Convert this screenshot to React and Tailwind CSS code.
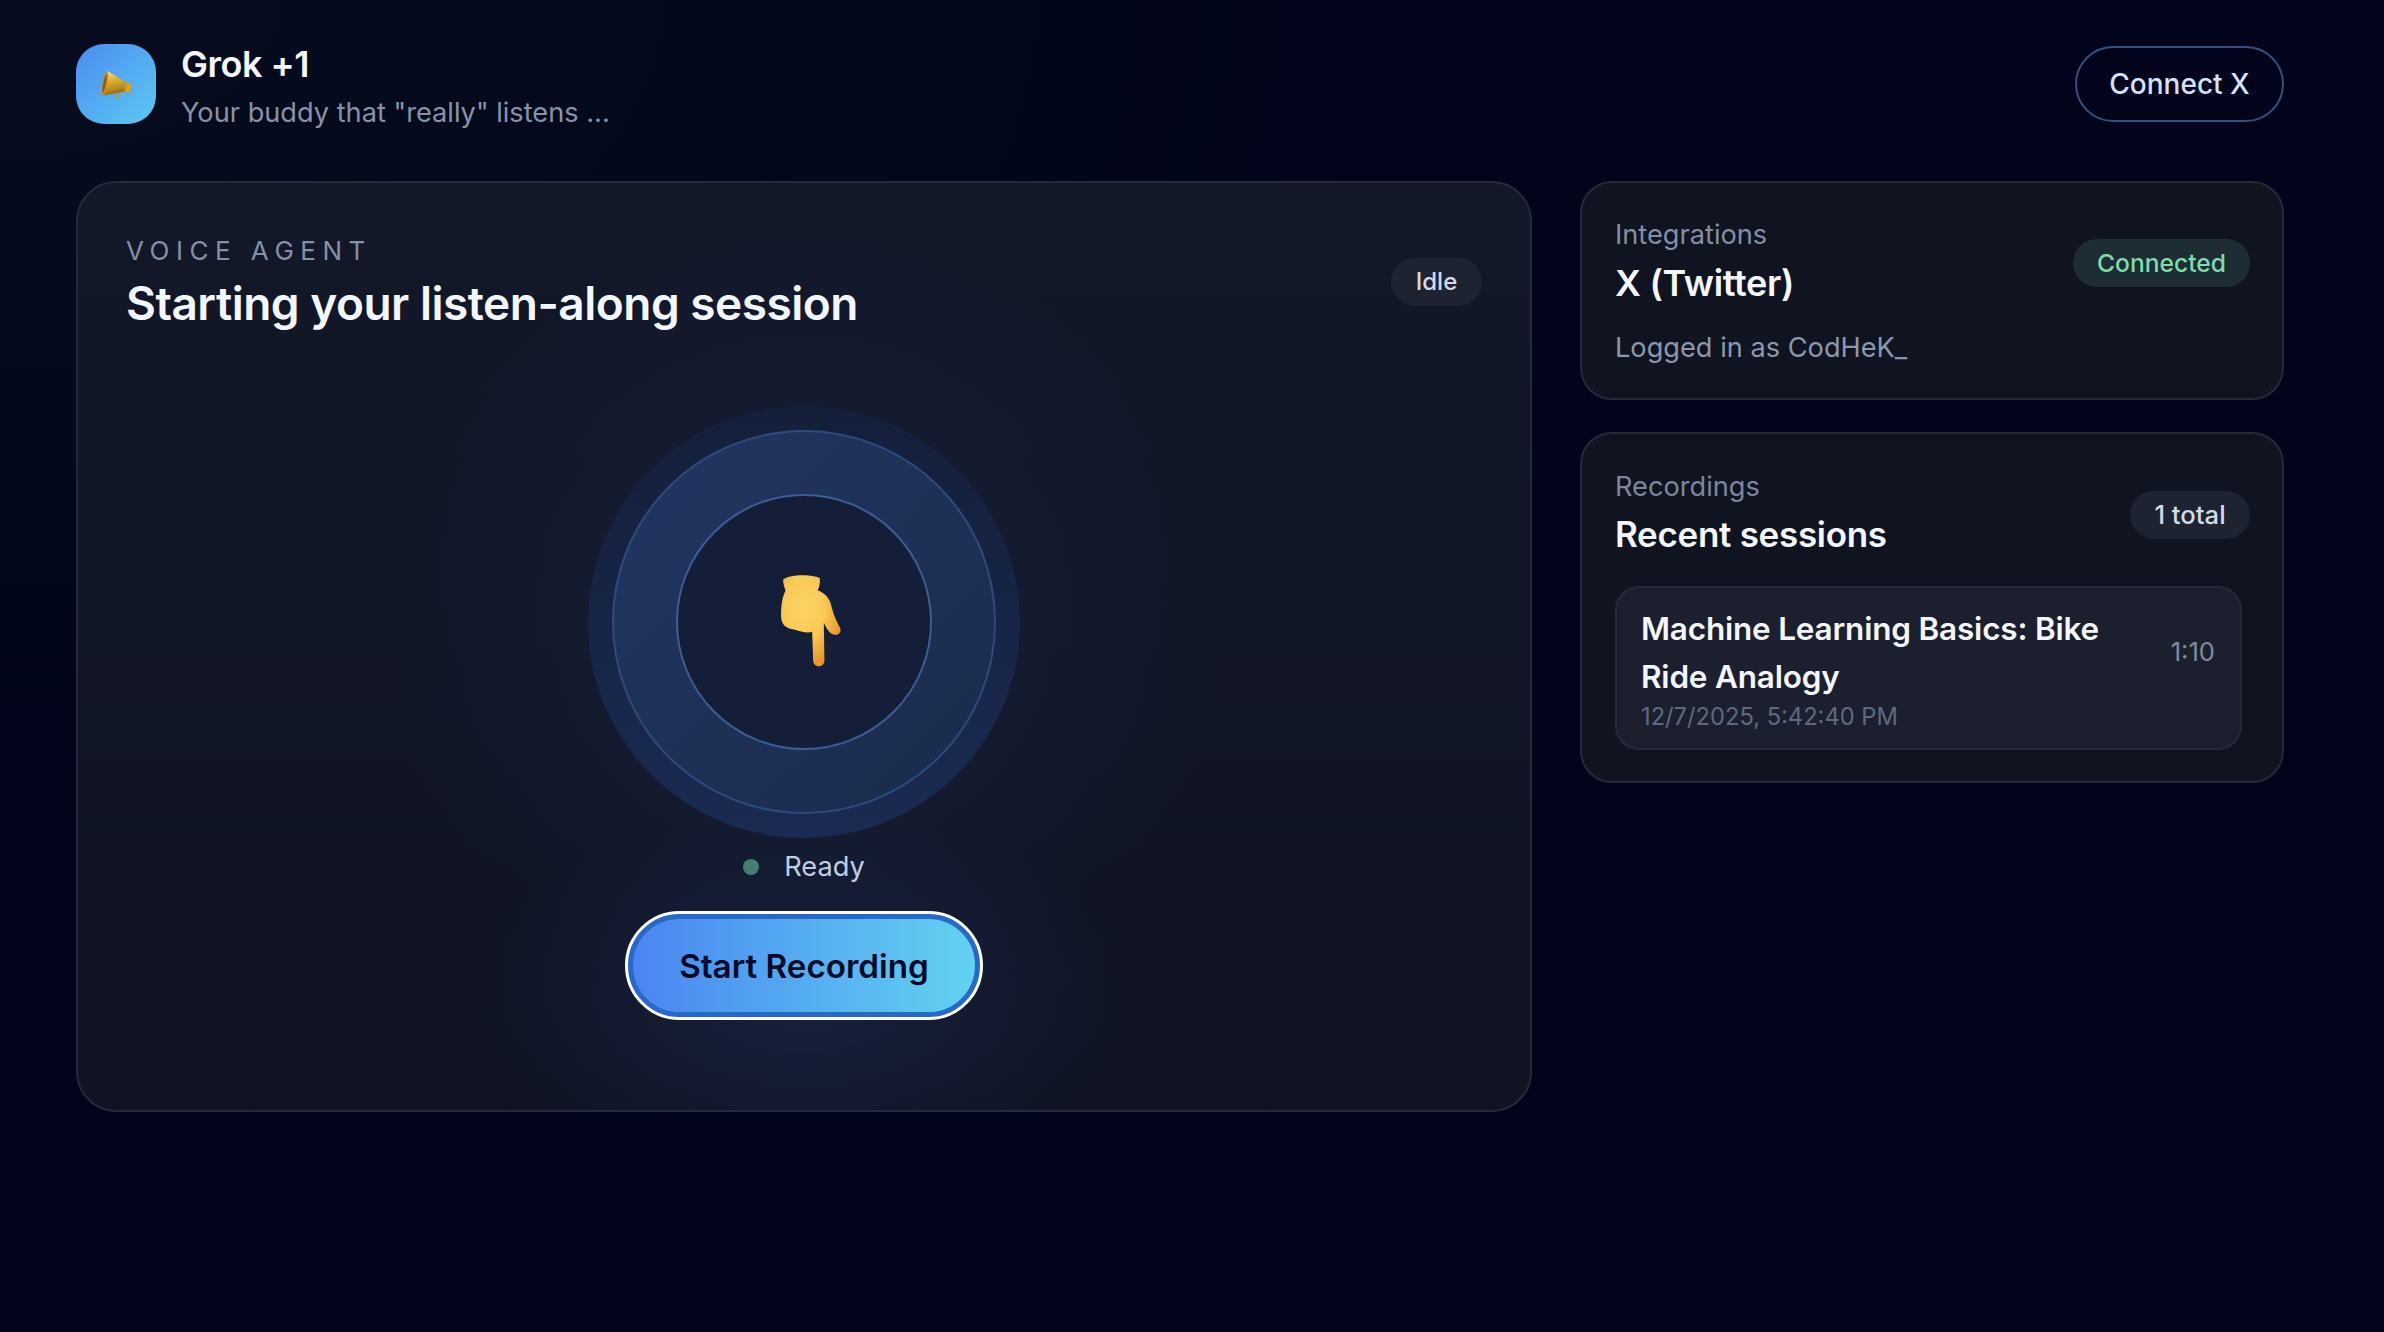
import React from 'react'

function Megaphone() {
  return (
    <svg viewBox="90 85 100 90" className="w-[33px] h-[30px]">
      <defs>
        <linearGradient id="gold" x1="0.2" y1="0" x2="0.45" y2="1">
          <stop offset="0" stopColor="#fbe68f" />
          <stop offset="0.35" stopColor="#e3b535" />
          <stop offset="0.75" stopColor="#b98a1c" />
          <stop offset="1" stopColor="#7c5510" />
        </linearGradient>
      </defs>
      <circle cx="143" cy="161" r="8" fill="none" stroke="#c9981f" strokeWidth="3.5" />
      <path d="M112 90 L166 124 L185 130 L181 157 L162 153 L99 165 Z" fill="url(#gold)" />
      <path d="M166 124 L185 130 L181 157 L162 153 Z" fill="#d6a82c" />
      <path d="M170 126 L166 154" stroke="#8f6814" strokeWidth="2" />
      <ellipse cx="105" cy="128" rx="8" ry="38" transform="rotate(10 105 128)" fill="#c5932a" />
      <ellipse cx="104" cy="128" rx="4" ry="29" transform="rotate(10 104 128)" fill="#8a5a1e" />
    </svg>
  )
}

function PointingHand() {
  return (
    <svg viewBox="110 70 200 295" className="w-[67px] h-[98px] ml-3 -mt-[2px]">
      <defs>
        <radialGradient id="skin" cx="0.38" cy="0.35" r="0.65">
          <stop offset="0" stopColor="#fbd566" />
          <stop offset="0.55" stopColor="#f9c955" />
          <stop offset="1" stopColor="#e8992a" />
        </radialGradient>
      </defs>
      <path
        d="M128 92 C150 76 215 76 238 88 C240 102 236 115 232 126 C250 132 264 146 270 162 C276 188 284 212 298 236 C306 250 294 262 280 258 C268 256 258 240 250 222 L252 336 C252 360 218 360 218 336 L215 250 C200 256 180 248 160 243 C140 240 126 232 122 212 C120 190 122 150 135 126 C130 114 127 102 128 92 Z"
        fill="url(#skin)"
      />
    </svg>
  )
}

function Pill({ className, children }) {
  return (
    <span className={'flex h-12 items-center justify-center rounded-full font-medium ' + className}>
      {children}
    </span>
  )
}

export default function App() {
  return (
    <div className="min-h-screen bg-[#01041a] bg-[radial-gradient(ellipse_at_0%_0%,_#070c1e,_transparent_45%)] pl-[76px] pr-[100px] pt-[44px] font-['Inter',sans-serif] text-white">
      <header className="flex h-20 items-center justify-between">
        <div className="flex h-20 items-start gap-[25px]">
          <div className="flex h-20 w-20 items-center justify-center rounded-[28px] bg-gradient-to-br from-[#4d8bf2] to-[#5cc9f0]">
            <Megaphone />
          </div>
          <div className="-mt-[4px]">
            <h1 className="text-[36px] font-semibold leading-[48px] tracking-[-0.5px] text-[#f3f6fc]">Grok +1</h1>
            <p className="mt-[6px] text-[27.2px] leading-[38px] text-[#8793a8]">Your buddy that "really" listens ...</p>
          </div>
        </div>
        <button className="h-[76px] w-[209px] rounded-full border-2 border-[#34507f] text-[28px] font-medium text-[#d3e2fb]">
          Connect X
        </button>
      </header>

      <main className="mt-[57px] flex items-start gap-[48px]">
        <section className="flex h-[931px] w-[1456px] flex-col rounded-[40px] border-2 border-[#262a38] bg-[radial-gradient(ellipse_340px_190px_at_50%_88%,_#18223f,_transparent),radial-gradient(ellipse_420px_400px_at_50%_48%,_#162039,_transparent),linear-gradient(180deg,_#131829,_#0f1322)] px-[48px] pt-[50px]">
          <div className="flex items-start justify-between">
            <div>
              <p className="text-[26px] uppercase leading-[36px] tracking-[0.25em] text-[#8390a6]">Voice Agent</p>
              <h2 className="mt-[4px] text-[46px] font-semibold leading-[60px] tracking-[-0.5px] text-[#f3f6fc]">Starting your listen-along session</h2>
            </div>
            <Pill className="mt-[25px] w-[91px] bg-[#1e2332] text-[24px] text-[#d3dbe8]">Idle</Pill>
          </div>

          <div className="mt-[73px] flex justify-center">
            <div className="flex h-[432px] w-[432px] items-center justify-center rounded-full bg-gradient-to-b from-[#14203a] to-[#1a2a52]">
              <div className="flex h-[384px] w-[384px] items-center justify-center rounded-full border-2 border-[#2f4a7c] bg-gradient-to-br from-[#223663] to-[#1a2b4b]">
                <div className="flex h-[256px] w-[256px] items-center justify-center rounded-full border-2 border-[#3c5e95] bg-[#141e38]">
                  <PointingHand />
                </div>
              </div>
            </div>
          </div>

          <div className="mt-[11px] flex items-center justify-center gap-[25px]">
            <span className="h-4 w-4 rounded-full bg-[#44806f]" />
            <span className="text-[27.2px] leading-[36px] text-[#c0cde2]">Ready</span>
          </div>

          <div className="mt-[28px] flex justify-center">
            <button className="h-[105px] w-[354px] rounded-full border-[6px] border-[#2768c8] bg-gradient-to-r from-[#4b85f1] to-[#63d2ef] pt-[2px] text-[33.2px] font-semibold text-[#020a26] outline-[3px] outline-white -outline-offset-[1px]">
              Start Recording
            </button>
          </div>
        </section>

        <aside className="flex w-[704px] flex-col gap-[32px]">
          <section className="flex h-[219px] items-start justify-between rounded-[32px] border-2 border-[#262a38] bg-[#101421] pl-[33px] pr-[32px] pt-[34px]">
            <div>
              <p className="text-[27.2px] leading-[36px] text-[#838fa5]">Integrations</p>
              <h3 className="mt-[6px] text-[36px] font-semibold leading-[48px] tracking-[-0.3px] text-[#f3f6fc]">X (Twitter)</h3>
              <p className="mt-[23px] text-[27.2px] leading-[36px] text-[#8c98ad]">Logged in as CodHeK_</p>
            </div>
            <Pill className="mt-[22px] w-[177px] bg-[#1e2c33] text-[24.6px] text-[#7fdcab]">Connected</Pill>
          </section>

          <section className="h-[351px] rounded-[32px] border-2 border-[#262a38] bg-[#101421] pl-[33px] pr-[40px] pt-[35px]">
            <div className="flex items-start justify-between">
              <div>
                <p className="text-[27.2px] leading-[36px] text-[#7b879d]">Recordings</p>
                <h3 className="mt-[5px] text-[35px] font-semibold leading-[48px] tracking-[-0.3px] text-[#f3f6fc]">Recent sessions</h3>
              </div>
              <Pill className="mr-[-8px] mt-[22px] w-[120px] bg-[#1e2332] text-[25.6px] text-[#d3dbe8]">1 total</Pill>
            </div>
            <div className="mt-[28px] flex h-[164px] items-center justify-between rounded-[24px] border-2 border-[#262a38] bg-[#1c1f2e] pl-[24px] pr-[25px]">
              <div className="w-[500px]">
                <p className="text-[31.5px] font-semibold leading-[48px] tracking-[-0.2px] text-[#f3f6fc]">Machine Learning Basics: Bike Ride Analogy</p>
                <p className="mt-[1px] text-[23.7px] leading-[30px] text-[#5d6a80]">12/7/2025, 5:42:40 PM</p>
              </div>
              <span className="mb-[32px] text-[25.6px] text-[#7f8ba1]">1:10</span>
            </div>
          </section>
        </aside>
      </main>
    </div>
  )
}
